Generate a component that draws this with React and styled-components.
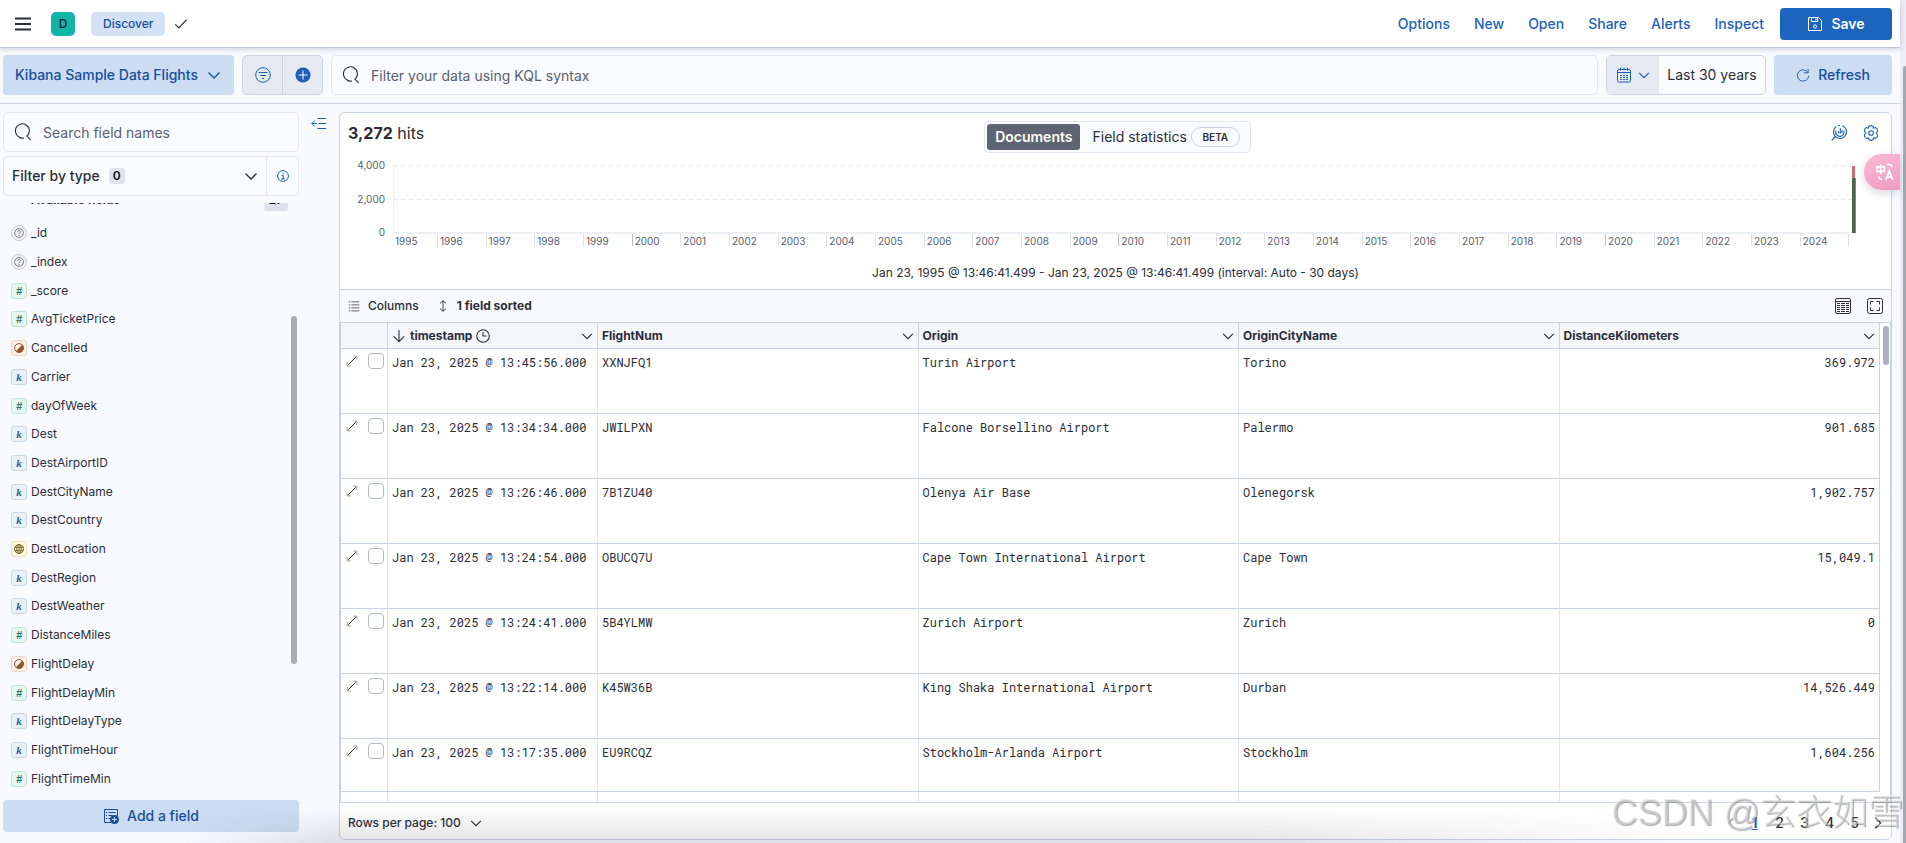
import React from "react";
import styled, { createGlobalStyle, css } from "styled-components";

const c = {
  ink: "#2b2d38",
  subdued: "#596070",
  primary: "#1d5fb8",
  primaryDark: "#174f9c",
  fill: "#1c64be",
  light: "#ccdcf2",
  page: "#f9faff",
  line: "#cad3e4",
  faint: "#e3e6f1",
  field: "#fbfcff",
  grey: "#e4e9f2",
};

const Global = createGlobalStyle`
  *, *::before, *::after { box-sizing: border-box; }
  body { margin: 0; background: ${c.page}; color: ${c.ink}; font: 14px/20px Inter, "Liberation Sans", sans-serif; overflow: hidden; }
  button, input { font: inherit; color: inherit; }
  button { border: 0; padding: 0; background: none; cursor: pointer; white-space: nowrap; }
  svg { display: block; flex: none; }
`;

const Svg = styled.svg.attrs({ viewBox: "0 0 16 16", fill: "none", stroke: "currentColor", "aria-hidden": true })`
  width: ${(p) => p.$s || 16}px;
  height: ${(p) => p.$s || 16}px;
`;

const Chevron = ({ s = 16 }) => <Svg $s={s}><path d="M2.5 5.5 8 11l5.5-5.5" strokeWidth="1.3" /></Svg>;
const SearchIcon = () => (
  <Svg $s={18}><path d="M4.2 12.2A6.2 6.2 0 1 1 12.6 10.400l-1.100 1.200 3.200 3.400M4.200 12.200c1.600 1.300 3.500 1.400 4.600 1.100" strokeWidth="1" /></Svg>
);
const MenuIcon = () => <Svg><path d="M0 2.500h16M0 8h16M0 13.500h16" strokeWidth="2" /></Svg>;
const CheckIcon = () => <Svg $s={14}><path d="M1.500 8.500 5.500 12.500 14.500 3" strokeWidth="1.400" /></Svg>;
const FilterIcon = () => <Svg><circle cx="8" cy="8" r="7.300" /><path d="M3.500 5.500h9M5 8.500h6M7 11.500h2" /></Svg>;
const PlusIcon = () => (
  <Svg><circle cx="8" cy="8" r="7.600" fill="currentColor" stroke="none" /><path d="M8 3.500v9M3.500 8h9" stroke="#fff" /></Svg>
);
const InfoIcon = () => (
  <Svg $s={12}><circle cx="8" cy="8" r="7.200" strokeWidth="1.300" /><path d="M6 7h2.200v5M5.500 12h5M7.200 4.200h1.600" strokeWidth="1.400" /></Svg>
);
const CalendarIcon = () => (
  <Svg><rect x="1.500" y="2.500" width="13" height="12.500" rx="1.500" /><path d="M1.500 5.500h13M4.500 0.500v3M8 0.500v3M11.500 0.500v3" /><path d="M4 8.500h8M4 10.500h8M4 12.500h8" strokeDasharray="2 1" /></Svg>
);
const RefreshIcon = () => <Svg $s={14}><path d="M13.800 1v4.500H9.300M13.600 5.200A6.500 6.500 0 1 0 14.500 9" /></Svg>;
const SaveIcon = () => (
  <Svg><path d="M1.500 1.500h10l3 3v10h-13zM4.500 1.500v4h6v-4M9 2.500v2" /><circle cx="8" cy="10.500" r="1.600" /></Svg>
);
const CollapseIcon = () => <Svg><path d="M6.500 2.500H15M7.500 7.500H15M6.500 12.500H15M1 7.500h5M3.800 4.500l-3 3 3 3" strokeWidth="1" /></Svg>;
const LensIcon = () => (
  <Svg><circle cx="9" cy="7" r="6.500" strokeWidth="1.100" strokeDasharray="26 2 2 2" /><path d="M5 5.500a4.200 4.200 0 1 0 7.800.200" strokeWidth="1.100" /><path d="M4.300 11.500.700 15.300M7.500 6v2.500M9.300 3v5.500M11 5v3" strokeWidth="1.100" /></Svg>
);
const GearIcon = () => (
  <Svg><circle cx="8" cy="8" r="2.300" strokeWidth="1.100" /><path d="M6 1.200Q8 .100 10 1.200l.500 2.100 2.200-.700q2 1.200 2 3.200L13.200 8l1.500 2.200q0 2-2 3.200l-2.200-.700-.500 2.100q-2 1.100-4 0l-.500-2.100-2.200.700q-2-1.200-2-3.200L2.800 8 1.300 5.800q0-2 2-3.200l2.200.700z" strokeWidth="1.100" strokeLinejoin="round" /></Svg>
);
const ListIcon = () => <Svg $s={12}><path d="M4.500 2.500H15M4.500 6.500H15M4.500 10.500H15M4.500 14.500H15M1 2.500h2M1 6.500h2M1 10.500h2M1 14.500h2" /></Svg>;
const SortIcon = () => <Svg $s={12}><path d="M8 1v14M4 4.500 8 1l4 3.500M4 11.500 8 15l4-3.500" strokeWidth="1.200" /></Svg>;
const ArrowDown = () => <Svg $s={14}><path d="M8 1v13M2 8.500l6 6 6-6" strokeWidth="1.200" /></Svg>;
const ClockIcon = () => <Svg $s={14}><circle cx="8" cy="8" r="7.200" strokeWidth="1.200" /><path d="M8 3.500V8h4" strokeWidth="1.200" /></Svg>;
const TableIcon = () => (
  <Svg><rect x=".500" y=".500" width="15" height="15" rx="1.500" /><path d="M.500 3.500h15" /><path d="M2 5.500h12M2 7.500h12M2 9.500h12M2 11.500h12M2 13.500h12" strokeDasharray="3 1 4 1 3 0" /></Svg>
);
const FullIcon = () => (
  <Svg><rect x=".500" y=".500" width="15" height="15" rx="2" /><path d="M3.500 6.500v-3h3M9.500 3.500h3v3M12.500 9.500v3h-3M6.500 12.500h-3v-3" /></Svg>
);
const ExpandIcon = () => <Svg $s={12}><path d="M3 13 13 3" strokeWidth="1.300" /><path d="M9.500 1.500h5v5M1.500 9.500v5h5" strokeWidth="1" strokeOpacity=".6" /></Svg>;
const AddFieldIcon = () => (
  <Svg><path d="M14.500 8V1.500h-13v13H8M3 4.500h1M5.500 4.500h7M3 7.500h1M5.500 7.500h4M3 10.500h1M5.500 10.500h2" /><circle cx="11.500" cy="11.500" r="4.500" fill="currentColor" stroke="none" /><path d="M11.500 9v5M9 11.500h5" stroke="#ccdcf2" /></Svg>
);

/* page frame */
const Page = styled.div`
  display: flex;
  height: 100vh;
`;
const Content = styled.div`
  flex: 1;
  min-width: 0;
  display: flex;
  flex-direction: column;
`;
const PageScroll = styled.div`
  width: 6px;
  padding: 66px 0 0 3px;
  background: #ededf3;
  display: flex;
`;
const PageThumb = styled.div`
  flex: 1;
  background: #a3a9b3;
  border-radius: 3px 0 0 0;
`;

/* header */
const Header = styled.header`
  height: 48px;
  flex: none;
  display: flex;
  align-items: center;
  padding: 0 8px 0 15px;
  background: #fff;
  border-bottom: 1px solid #c3c9d8;
  box-shadow: 0 1px 5px rgba(40, 50, 90, 0.22);
  z-index: 1;
`;
const Space = styled.span`
  width: 24px;
  height: 24px;
  margin: 0 16px 0 20px;
  border-radius: 5px;
  background: #12b5a9;
  color: #06231f;
  font-size: 12px;
  font-weight: 500;
  line-height: 24px;
  text-align: center;
`;
const Crumb = styled.a`
  height: 24px;
  padding: 0 12px;
  margin-right: 9px;
  border-radius: 5px;
  background: #d3e2f6;
  color: ${c.primaryDark};
  font-size: 12px;
  font-weight: 500;
  line-height: 24px;
  text-decoration: none;
`;
const Nav = styled.nav`
  margin-left: auto;
  display: flex;
  align-items: center;
  gap: 24px;
  margin-right: 16px;
`;
const NavButton = styled.button`
  color: ${c.primary};
  font-weight: 500;
`;
const ActionButton = styled.button`
  display: flex;
  align-items: center;
  justify-content: center;
  gap: 8px;
  height: ${(p) => p.$h || 40}px;
  width: ${(p) => (p.$w ? p.$w + "px" : "auto")};
  flex: none;
  border-radius: 4px;
  font-weight: ${(p) => (p.$primary ? 600 : 500)};
  background: ${(p) => (p.$primary ? c.fill : c.light)};
  color: ${(p) => (p.$primary ? "#fff" : c.primaryDark)};
`;

/* query bar */
const QueryBar = styled.div`
  height: 56px;
  flex: none;
  display: flex;
  align-items: center;
  gap: 8px;
  padding: 0 8px 2px 3px;
  border-bottom: 1px solid ${c.line};
`;
const FilterGroup = styled.div`
  display: flex;
  width: 81px;
  height: 40px;
  border: 1px solid ${c.line};
  border-radius: 5px;
  background: ${c.grey};
  color: ${c.primary};
  overflow: hidden;
`;
const FilterButton = styled.button`
  flex: 1;
  display: grid;
  place-items: center;
  & + & {
    border-left: 1px solid ${c.line};
  }
`;
const SearchBox = styled.label`
  flex: ${(p) => (p.$grow ? 1 : "none")};
  display: flex;
  align-items: center;
  gap: 11px;
  height: 40px;
  padding: 0 10px;
  border: 1px solid ${c.faint};
  border-radius: 5px;
  background: ${c.field};
`;
const SearchInput = styled.input`
  flex: 1;
  min-width: 0;
  border: 0;
  outline: 0;
  padding: 2px 0 0;
  background: none;
  &::placeholder {
    color: ${c.subdued};
    opacity: 1;
  }
`;
const DateGroup = styled.div`
  display: flex;
  width: 160px;
  height: 40px;
  border: 1px solid ${c.line};
  border-radius: 5px;
  background: ${c.field};
  overflow: hidden;
`;
const DateQuick = styled.button`
  width: 52px;
  display: flex;
  align-items: center;
  justify-content: center;
  gap: 5px;
  background: ${c.grey};
  color: ${c.primary};
`;
const DateRange = styled.button`
  flex: 1;
`;

/* body */
const Body = styled.div`
  flex: 1;
  min-height: 0;
  display: flex;
  padding: 8px 8px 3px 3px;
`;
const Sidebar = styled.aside`
  width: 296px;
  flex: none;
  display: flex;
  flex-direction: column;
  padding-bottom: 8px;
`;
const TypeFilter = styled.div`
  display: flex;
  height: 40px;
  flex: none;
  margin: 4px 0 7px;
  border: 1px solid ${c.faint};
  border-radius: 5px;
  background: ${c.field};
`;
const TypeButton = styled.button`
  flex: 1;
  display: flex;
  align-items: center;
  gap: 9px;
  padding: 0 7px 0 8px;
  font-weight: 500;
  & > svg {
    margin-left: auto;
  }
`;
const InfoButton = styled.button`
  width: 32px;
  display: grid;
  place-items: center;
  border-left: 1px solid ${c.faint};
  color: ${c.primary};
`;
const Count = styled.span`
  min-width: 16px;
  padding: 0 4px;
  border-radius: 3px;
  background: #dde2ee;
  color: #111;
  font-size: 12px;
  font-weight: 600;
  line-height: 16px;
  text-align: center;
`;
const FieldScroll = styled.div`
  flex: 1;
  min-height: 0;
  display: flex;
  overflow: hidden;
`;
const FieldColumn = styled.div`
  flex: 1;
  display: flex;
  flex-direction: column;
`;
const GroupHeader = styled.h3`
  display: flex;
  align-items: center;
  justify-content: space-between;
  height: 24px;
  flex: none;
  margin: -15px 3px 7px 28px;
  font-size: 12px;
  font-weight: 700;
`;
const GroupCount = styled(Count)`
  width: 24px;
  line-height: 22px;
`;
const FieldList = styled.ul`
  flex: 1;
  display: flex;
  flex-direction: column;
  margin: 0;
  padding: 0 0 7px 8px;
  list-style: none;
`;
const FieldItem = styled.li`
  flex: 1;
  display: flex;
  align-items: center;
  gap: 4px;
  font-size: 12px;
  line-height: 16px;
`;
const tones = {
  number: css`border-color: #bfe5d6; background: #e8f6f1; color: #2f7660;`,
  keyword: css`border-color: #c6d7e8; background: #eaf1f8; color: #315b87;`,
  boolean: css`border-color: #f3d3bb; background: #fdf1e8; color: #96562c;`,
  geo: css`border-color: #efe3b1; background: #fcf8e3; color: #7a6d25;`,
  unknown: css`border-color: #cbcdd3; background: #eff0f3; color: #777b85; border-radius: 50%;`,
};
const Token = styled.span`
  width: 16px;
  height: 16px;
  flex: none;
  display: grid;
  place-items: center;
  border: 1px solid;
  border-radius: 3px;
  font: italic bold 11px/14px ${(p) => (p.$type === "keyword" ? '"Liberation Serif", serif' : '"Liberation Sans", sans-serif')};
  ${(p) => tones[p.$type]}
`;
const FieldThumb = styled.div`
  width: 6px;
  height: 348px;
  flex: none;
  margin: 113px 2px 0 0;
  border-radius: 3px;
  background: #a7aeb6;
`;
const CollapseColumn = styled.div`
  width: 40px;
  flex: none;
  padding: 4px 12px;
  color: ${c.primary};
`;

/* results panel */
const Panel = styled.main`
  flex: 1;
  min-width: 0;
  display: flex;
  flex-direction: column;
  border: 1px solid ${c.line};
  border-radius: 6px;
  background: #fff;
  overflow: hidden;
`;
const PanelTop = styled.div`
  display: grid;
  grid-template-columns: 1fr auto 1fr;
  align-items: center;
  height: 48px;
  flex: none;
  padding: 0 12px 8px 8px;
`;
const Hits = styled.div`
  font-size: 16px;
`;
const Tabs = styled.div`
  display: flex;
  padding: 2px;
  height: 32px;
  margin: 8px 0 0 8px;
  border: 1px solid ${c.faint};
  border-radius: 4px;
  background: ${c.field};
`;
const Tab = styled.button`
  display: flex;
  align-items: center;
  gap: 4px;
  padding: 0 8px;
  border-radius: 3px;
  ${(p) => p.$on && css`background: #5f6472; color: #fff; font-weight: 600;`}
  & + & {
    margin-left: 4px;
  }
`;
const Beta = styled.span`
  width: 49px;
  border: 1px solid ${c.line};
  border-radius: 10px;
  font-size: 10px;
  font-weight: 600;
  line-height: 18px;
  text-align: center;
`;
const IconRow = styled.div`
  display: flex;
  gap: 16px;
  justify-content: flex-end;
  color: ${(p) => (p.$blue ? c.primary : c.ink)};
  margin-left: auto;
`;
const Chart = styled.section`
  flex: none;
  display: grid;
  grid-template-columns: 45px 1fr;
  column-gap: 8px;
  padding: 0 35px 0 0;
  height: 128px;
  grid-template-rows: 78px 22px 28px;
  color: ${c.subdued};
  font-size: 10px;
  line-height: 12px;
`;
const YAxis = styled.div`
  display: flex;
  flex-direction: column;
  justify-content: space-between;
  text-align: right;
  margin: -2px 0 1px;
`;
const Plot = styled.svg`
  width: 100%;
  height: 78px;
`;
const XAxis = styled.div`
  grid-column: 2;
  display: flex;
  height: 12px;
  margin-top: -5px;
`;
const Year = styled.span`
  flex: ${(p) => p.$grow || 49} 1 0;
  min-width: 0;
  padding: 1px 0 0 2px;
  border-left: ${(p) => (p.$first ? "0" : "1px solid " + (p.$major ? "#b9bcc3" : "#dfe0e4"))};
`;
const Range = styled.p`
  grid-column: 1 / -1;
  margin: 4px -35px 0 0;
  color: ${c.ink};
  font-size: 12px;
  line-height: 16px;
  text-align: center;
`;
const GridBar = styled.div`
  display: flex;
  align-items: center;
  height: 33px;
  flex: none;
  gap: 18px;
  padding: 0 8px;
  border-top: 1px solid ${c.line};
  background: ${c.page};
`;
const BarButton = styled.button`
  display: flex;
  align-items: center;
  gap: 8px;
  font-size: 12px;
  font-weight: ${(p) => (p.$bold ? 700 : 500)};
`;
const GridArea = styled.div`
  flex: 1;
  min-height: 0;
  display: flex;
  border: 1px solid ${c.line};
`;
const GridColumn = styled.div`
  flex: 1;
  min-width: 0;
  display: flex;
  flex-direction: column;
`;
const GridView = styled.div`
  flex: 1;
  min-height: 0;
  overflow: hidden;
  border-right: 1px solid ${c.line};
`;
const Table = styled.table`
  width: 100%;
  table-layout: fixed;
  border-collapse: separate;
  border-spacing: 0;
  font-size: 12px;
  line-height: 16px;
`;
const Col = styled.col`
  width: ${(p) => (p.$w ? p.$w + "px" : "auto")};
`;
const Th = styled.th`
  height: 26px;
  padding: 0 3px 0 4px;
  border-bottom: 1px solid ${c.line};
  background: #f4f6fa;
  font-weight: 700;
  text-align: left;
  & + & {
    border-left: 1px solid ${c.line};
  }
`;
const ThInner = styled.div`
  display: flex;
  align-items: center;
  gap: 4px;
  & > button {
    margin-left: auto;
  }
`;
const Td = styled.td`
  height: 65px;
  padding: 5px 4px 0;
  border-bottom: 1px solid ${c.line};
  vertical-align: top;
  font-family: "Roboto Mono", "Liberation Mono", monospace;
  text-align: ${(p) => (p.$right ? "right" : "left")};
  & + & {
    border-left: 1px solid ${c.faint};
  }
`;
const RowTools = styled.div`
  display: flex;
  align-items: center;
  gap: 10px;
  padding-left: 1px;
  margin-top: -1px;
`;
const Check = styled.input`
  appearance: none;
  width: 16px;
  height: 16px;
  flex: none;
  margin: 0;
  border: 1px solid #b5b9c4;
  border-radius: 4px;
  background: #fff;
`;
const GridTail = styled.div`
  display: grid;
  grid-template-columns: 46px 210px repeat(4, 1fr);
  height: 11px;
  flex: none;
  border-top: 1px solid ${c.line};
  padding-right: 1px;
`;
const TailCell = styled.span`
  & + & {
    border-left: 1px solid ${c.faint};
  }
`;
const GridScroll = styled.div`
  width: 10px;
  flex: none;
  padding: 3px 0 0 3px;
`;
const GridThumb = styled.div`
  width: 6px;
  height: 39px;
  border-radius: 3px;
  background: #adb1bb;
`;
const Footer = styled.footer`
  height: 36px;
  flex: none;
  display: flex;
  align-items: center;
  justify-content: space-between;
  padding: 4px 2px 0 8px;
`;
const Pager = styled.nav`
  display: flex;
  font-size: 14px;
  font-weight: 500;
`;
const PageLink = styled.a`
  width: ${(p) => (p.$arrow ? 22 : 25)}px;
  display: grid;
  place-items: center;
  color: ${(p) => (p.$on ? c.fill : c.ink)};
  font-weight: ${(p) => (p.$on ? 700 : 500)};
  text-decoration: ${(p) => (p.$on ? "underline" : "none")};
  opacity: ${(p) => (p.$off ? 0.5 : 1)};
`;

/* overlays */
const Translate = styled.button`
  position: fixed;
  top: 154px;
  right: 6px;
  width: 36px;
  height: 36px;
  padding-left: 12px;
  border-radius: 18px 0 0 18px;
  background: linear-gradient(160deg, #fbb9d3, #f19cc0);
  box-shadow: 0 3px 10px rgba(60, 60, 90, 0.2);
  color: #fff;
  z-index: 2;
`;
const BottomShade = styled.div`
  position: fixed;
  left: 180px;
  right: 200px;
  bottom: 0;
  height: 36px;
  background: linear-gradient(to bottom, transparent, rgba(60, 60, 60, 0.14));
  mask-image: linear-gradient(to right, transparent, #000 160px, #000 70%, transparent);
  pointer-events: none;
`;
const Watermark = styled.div`
  position: fixed;
  right: 2px;
  bottom: 8px;
  color: rgba(222, 222, 224, 0.5);
  text-shadow: 1px 1px 1px rgba(90, 90, 90, 0.5), -1px -1px 0 rgba(255, 255, 255, 0.3);
  font: 300 36px/44px "Liberation Sans", "Noto Sans CJK SC", sans-serif;
  pointer-events: none;
  z-index: 3;
`;

const fields = [
  ["unknown", "_id"], ["unknown", "_index"], ["number", "_score"], ["number", "AvgTicketPrice"],
  ["boolean", "Cancelled"], ["keyword", "Carrier"], ["number", "dayOfWeek"], ["keyword", "Dest"],
  ["keyword", "DestAirportID"], ["keyword", "DestCityName"], ["keyword", "DestCountry"],
  ["geo", "DestLocation"], ["keyword", "DestRegion"], ["keyword", "DestWeather"],
  ["number", "DistanceMiles"], ["boolean", "FlightDelay"], ["number", "FlightDelayMin"],
  ["keyword", "FlightDelayType"], ["keyword", "FlightTimeHour"], ["number", "FlightTimeMin"],
];
const glyphs = {
  number: "#",
  keyword: "k",
  unknown: <Svg $s={10}><circle cx="8" cy="8" r="7" strokeWidth="1.500" /><path d="M5.800 6c0-3 4.600-2.600 4.400 0C10 7.500 8 7.500 8 9.500M8 11v2" strokeWidth="1.500" /></Svg>,
  boolean: <Svg $s={10}><circle cx="8" cy="8" r="7" strokeWidth="1.600" /><path d="M13.500 2.500A7.500 7.500 0 0 1 2.500 13.500z" fill="currentColor" stroke="none" /></Svg>,
  geo: <Svg $s={10}><circle cx="8" cy="8" r="7.200" strokeWidth="1.600" /><ellipse cx="8" cy="8" rx="3.500" ry="7" strokeWidth="1.600" /><path d="M1 5.500h14M1 10.500h14M8 1v14" strokeWidth="1.600" /></Svg>,
};

const columns = ["FlightNum", "Origin", "OriginCityName", "DistanceKilometers"];
const rows = [
  ["13:45:56", "XXNJFQ1", "Turin Airport", "Torino", "369.972"],
  ["13:34:34", "JWILPXN", "Falcone Borsellino Airport", "Palermo", "901.685"],
  ["13:26:46", "7B1ZU40", "Olenya Air Base", "Olenegorsk", "1,902.757"],
  ["13:24:54", "OBUCQ7U", "Cape Town International Airport", "Cape Town", "15,049.1"],
  ["13:24:41", "5B4YLMW", "Zurich Airport", "Zurich", "0"],
  ["13:22:14", "K45W36B", "King Shaka International Airport", "Durban", "14,526.449"],
  ["13:17:35", "EU9RCQZ", "Stockholm-Arlanda Airport", "Stockholm", "1,604.256"],
];
const years = Array.from({ length: 29 }, (_, i) => 1996 + i);

function FieldSidebar() {
  return (
    <Sidebar>
      <SearchBox>
        <SearchIcon />
        <SearchInput aria-label="Search field names" placeholder="Search field names" />
      </SearchBox>
      <TypeFilter>
        <TypeButton>Filter by type <Count>0</Count><Chevron /></TypeButton>
        <InfoButton aria-label="Field type help"><InfoIcon /></InfoButton>
      </TypeFilter>
      <FieldScroll>
        <FieldColumn>
          <GroupHeader>Available fields <GroupCount>27</GroupCount></GroupHeader>
          <FieldList>
            {fields.map(([type, name]) => (
              <FieldItem key={name}><Token $type={type}>{glyphs[type]}</Token>{name}</FieldItem>
            ))}
          </FieldList>
        </FieldColumn>
        <FieldThumb />
      </FieldScroll>
      <ActionButton $h={32}><AddFieldIcon />Add a field</ActionButton>
    </Sidebar>
  );
}

function Histogram() {
  return (
    <Chart>
      <YAxis><span>4,000</span><span>2,000</span><span>0</span></YAxis>
      <Plot aria-label="Hits over time">
        <g stroke="#eeeff2">
          <path d="M.5 5v67" strokeWidth="1" />
          <line x1="0" x2="100%" y1="5" y2="5" strokeWidth="2" strokeDasharray="4 4" />
          <line x1="0" x2="100%" y1="38.500" y2="38.500" stroke="#e6e7ea" strokeDasharray="4 4" />
          <line x1="0" x2="100%" y1="72" y2="72" strokeWidth="2" />
        </g>
        <svg x="100%" overflow="visible">
          <rect x="-4" y="5" width="3" height="12" fill="#c9716d" />
          <rect x="-4" y="17" width="3" height="55" fill="#4f6350" />
          <rect x="-3" y="17" width="1" height="55" fill="#8c4a3f" />
          <rect x="-1" y="17" width="1" height="55" fill="#4c9f88" />
        </svg>
      </Plot>
      <XAxis>
        <Year $first $grow={45}>1995</Year>
        {years.map((y) => <Year key={y} $major={y % 10 === 0}>{y}</Year>)}
        <Year $grow={5} />
      </XAxis>
      <Range>Jan 23, 1995 @ 13:46:41.499 - Jan 23, 2025 @ 13:46:41.499 (interval: Auto - 30 days)</Range>
    </Chart>
  );
}

function ResultsTable() {
  return (
    <Table>
      <colgroup><Col $w={46} /><Col $w={210} /><Col /><Col /><Col /><Col /></colgroup>
      <thead>
        <tr>
          <Th aria-label="Row controls" />
          <Th>
            <ThInner><ArrowDown /> timestamp <ClockIcon /><button aria-label="timestamp options"><Chevron s={14} /></button></ThInner>
          </Th>
          {columns.map((name) => (
            <Th key={name}>
              <ThInner>{name}<button aria-label={`${name} options`}><Chevron s={14} /></button></ThInner>
            </Th>
          ))}
        </tr>
      </thead>
      <tbody>
        {rows.map(([time, flight, origin, city, km]) => (
          <tr key={flight}>
            <Td>
              <RowTools>
                <button aria-label={`Expand ${flight}`}><ExpandIcon /></button>
                <Check type="checkbox" aria-label={`Select ${flight}`} />
              </RowTools>
            </Td>
            <Td>Jan 23, 2025 @ {time}.000</Td>
            <Td>{flight}</Td>
            <Td>{origin}</Td>
            <Td>{city}</Td>
            <Td $right>{km}</Td>
          </tr>
        ))}
      </tbody>
    </Table>
  );
}

export default function App() {
  return (
    <Page>
      <Global />
      <Content>
        <Header>
          <button aria-label="Menu"><MenuIcon /></button>
          <Space>D</Space>
          <Crumb href="#discover">Discover</Crumb>
          <CheckIcon />
          <Nav>
            {["Options", "New", "Open", "Share", "Alerts", "Inspect"].map((n) => <NavButton key={n}>{n}</NavButton>)}
          </Nav>
          <ActionButton $primary $h={32} $w={112}><SaveIcon />Save</ActionButton>
        </Header>
        <QueryBar>
          <ActionButton $w={231}>Kibana Sample Data Flights <Chevron /></ActionButton>
          <FilterGroup>
            <FilterButton aria-label="Saved query menu"><FilterIcon /></FilterButton>
            <FilterButton aria-label="Add filter"><PlusIcon /></FilterButton>
          </FilterGroup>
          <SearchBox $grow>
            <SearchIcon />
            <SearchInput aria-label="Query" placeholder="Filter your data using KQL syntax" />
          </SearchBox>
          <DateGroup>
            <DateQuick aria-label="Quick dates"><CalendarIcon /><Chevron s={14} /></DateQuick>
            <DateRange>Last 30 years</DateRange>
          </DateGroup>
          <ActionButton $w={118}><RefreshIcon />Refresh</ActionButton>
        </QueryBar>
        <Body>
          <FieldSidebar />
          <CollapseColumn><button aria-label="Hide sidebar"><CollapseIcon /></button></CollapseColumn>
          <Panel>
            <PanelTop>
              <Hits><strong>3,272</strong> hits</Hits>
              <Tabs>
                <Tab $on>Documents</Tab>
                <Tab>Field statistics <Beta>BETA</Beta></Tab>
              </Tabs>
              <IconRow $blue>
                <button aria-label="Edit visualization"><LensIcon /></button>
                <button aria-label="Chart options"><GearIcon /></button>
              </IconRow>
            </PanelTop>
            <Histogram />
            <GridBar>
              <BarButton><ListIcon />Columns</BarButton>
              <BarButton $bold><SortIcon />1 field sorted</BarButton>
              <IconRow>
                <button aria-label="Display options"><TableIcon /></button>
                <button aria-label="Full screen"><FullIcon /></button>
              </IconRow>
            </GridBar>
            <GridArea>
              <GridColumn>
                <GridView><ResultsTable /></GridView>
                <GridTail>{[0, 1, 2, 3, 4, 5].map((i) => <TailCell key={i} />)}</GridTail>
              </GridColumn>
              <GridScroll><GridThumb /></GridScroll>
            </GridArea>
            <Footer>
              <BarButton>Rows per page: 100 <Chevron s={14} /></BarButton>
              <Pager aria-label="Pagination">
                <PageLink $arrow $off href="#prev" aria-label="Previous page"><Svg $s={14}><path d="M11 2 5 8l6 6" strokeWidth="1.300" /></Svg></PageLink>
                {[1, 2, 3, 4, 5].map((n) => <PageLink key={n} href={`#page-${n}`} $on={n === 1}>{n}</PageLink>)}
                <PageLink $arrow href="#next" aria-label="Next page"><Svg $s={14}><path d="m5 2 6 6-6 6" strokeWidth="1.500" /></Svg></PageLink>
              </Pager>
            </Footer>
          </Panel>
        </Body>
      </Content>
      <PageScroll><PageThumb /></PageScroll>
      <Translate aria-label="Translate">
        <Svg $s={18}><path d="M1 3.500h6.500v4H1zM4.200 1v9M9.500 1.500h2.500c1.500 0 2 .800 2 2.300M2.500 12c0 1.800.700 2.500 2.800 2.500M8.800 15l3-8 3 8M10 12.500h3.600" strokeWidth="1.500" /></Svg>
      </Translate>
      <BottomShade />
      <Watermark>CSDN @玄衣如雪</Watermark>
    </Page>
  );
}
